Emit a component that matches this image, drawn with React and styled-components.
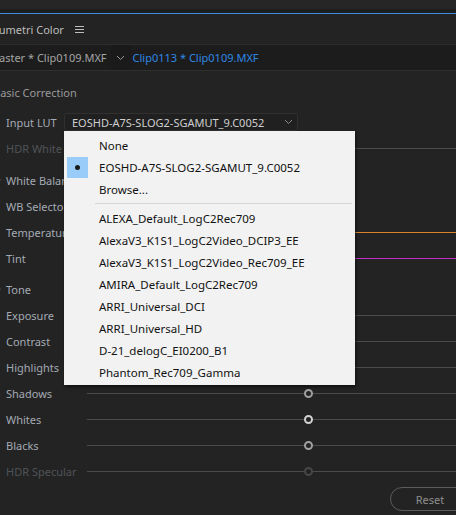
import React from "react";
import styled, { createGlobalStyle } from "styled-components";

const Global = createGlobalStyle`
  html, body {
    margin: 0;
    padding: 0;
    background: #232323;
    overflow: hidden;
  }
  body {
    font-family: "Noto Sans", "Liberation Sans", sans-serif;
    font-size: 11px;
  }
`;

const Panel = styled.div`
  width: 456px;
  height: 515px;
  overflow: hidden;
  background: #232323;
  display: flex;
  flex-direction: column;
  & > * {
    flex-shrink: 0;
  }
`;

const TopStrip = styled.div`
  height: 13px;
  background: linear-gradient(#262626 0, #262626 9px, #1e1e1e 9px);
  border-bottom: 1px solid #3d8ee0;
`;

const Header = styled.div`
  height: 30px;
  display: flex;
  align-items: center;
  gap: 11px;
  border-bottom: 1px solid #2c2c2c;
`;

const Title = styled.div`
  margin-left: -7px;
  color: #bdbdbd;
  font-size: 11px;
`;

const Burger = styled.div`
  width: 9px;
  display: flex;
  flex-direction: column;
  gap: 2px;
  span {
    height: 1px;
    background: #bdbdbd;
  }
`;

const TabBar = styled.div`
  height: 25px;
  background: #1c1c1c;
  border-bottom: 1px solid #2f2f2f;
  display: flex;
  align-items: center;
`;

const MasterTab = styled.div`
  margin-left: -11px;
  color: #a5a5a5;
  padding-right: 4px;
`;

const ChevronBox = styled.div`
  width: 20px;
  height: 25px;
  display: flex;
  align-items: center;
  justify-content: center;
  background: #1a1a1a;
  margin-right: 2px;
`;

const ClipTab = styled.div`
  color: #2f88e6;
`;

const Body = styled.div`
  display: flex;
  flex-direction: column;
  padding-top: 12px;
`;

const Section = styled.div`
  height: 18px;
  display: flex;
  align-items: center;
  margin-left: -7px;
  color: #9a9a9a;
  margin-bottom: 8px;
`;

const Row = styled.div`
  position: relative;
  height: 26px;
  display: flex;
  align-items: center;
  margin-top: ${(p) => p.gap || 0}px;
`;

const Label = styled.div`
  width: 81px;
  padding-left: 6px;
  flex-shrink: 0;
  white-space: nowrap;
  overflow: hidden;
  color: ${(p) => (p.dim ? "#4f5357" : "#a3aab3")};
`;

const Twirl = styled.div`
  position: absolute;
  left: -3px;
  top: 11px;
  width: 0;
  height: 0;
  border-top: 2px solid transparent;
  border-bottom: 2px solid transparent;
  border-left: 4px solid #777;
`;

const Track = styled.div`
  position: relative;
  flex: 1;
  height: 1px;
  background: ${(p) => p.bg || "#4a4a4a"};
`;

const Thumb = styled.div`
  position: absolute;
  left: 217px;
  top: -4px;
  width: 5px;
  height: 5px;
  border-radius: 50%;
  border: 2px solid ${(p) => p.color || "#a0a0a0"};
  background: #232323;
`;

const LutSelect = styled.div`
  margin-left: -23px;
  width: 221px;
  height: 16px;
  border: 1px solid #303030;
  border-radius: 3px;
  background: #202020;
  display: flex;
  align-items: center;
  justify-content: space-between;
  padding: 0 4px 0 7px;
  color: #cfcfcf;
`;

const Menu = styled.div`
  position: absolute;
  left: 64px;
  top: 131px;
  width: 291px;
  padding: 3px 0 2px;
  background: #f2f2f2;
  box-shadow: 1px 2px 3px rgba(0, 0, 0, 0.55);
  display: flex;
  flex-direction: column;
  z-index: 5;
`;

const Item = styled.div`
  height: 22px;
  display: flex;
  align-items: center;
  color: #111;
  font-size: 11.5px;
`;

const Check = styled.div`
  width: 21px;
  height: 21px;
  margin: 0 11px 0 3px;
  display: flex;
  align-items: center;
  justify-content: center;
  background: ${(p) => (p.on ? "#99ccf8" : "transparent")};
  &::after {
    content: "";
    width: 5px;
    height: 5px;
    border-radius: 50%;
    background: ${(p) => (p.on ? "#1a1a1a" : "transparent")};
  }
`;

const Sep = styled.div`
  height: 1px;
  background: #d6d6d6;
  margin: 3px 3px 3px 31px;
`;

const Footer = styled.div`
  display: flex;
  justify-content: flex-end;
  margin-right: -14px;
  margin-top: 3px;
`;

const ResetButton = styled.div`
  width: 78px;
  height: 22px;
  border: 1px solid #5c5c5c;
  border-radius: 12px;
  display: flex;
  align-items: center;
  justify-content: center;
  color: #8f8f8f;
`;

const Chevron = ({ color = "#9a9a9a" }) => (
  <svg width="9" height="6" viewBox="0 0 9 6">
    <path d="M1 1l3.5 3.5L8 1" fill="none" stroke={color} strokeWidth="1" />
  </svg>
);

const luts = [
  "ALEXA_Default_LogC2Rec709",
  "AlexaV3_K1S1_LogC2Video_DCIP3_EE",
  "AlexaV3_K1S1_LogC2Video_Rec709_EE",
  "AMIRA_Default_LogC2Rec709",
  "ARRI_Universal_DCI",
  "ARRI_Universal_HD",
  "D-21_delogC_EI0200_B1",
  "Phantom_Rec709_Gamma",
];

const tone = [
  { name: "Exposure" },
  { name: "Contrast" },
  { name: "Highlights" },
  { name: "Shadows" },
  { name: "Whites", thumb: "#d2d2d2" },
  { name: "Blacks" },
  { name: "HDR Specular", dim: true, thumb: "#474747" },
];

export default function App() {
  return (
    <Panel>
      <Global />
      <TopStrip />
      <Header>
        <Title>Lumetri Color</Title>
        <Burger>
          <span />
          <span />
          <span />
        </Burger>
      </Header>
      <TabBar>
        <MasterTab>Master * Clip0109.MXF</MasterTab>
        <ChevronBox>
          <Chevron />
        </ChevronBox>
        <ClipTab>Clip0113 * Clip0109.MXF</ClipTab>
      </TabBar>
      <Body>
        <Section>Basic Correction</Section>
        <Row>
          <Label>Input LUT</Label>
          <LutSelect>
            EOSHD-A7S-SLOG2-SGAMUT_9.C0052
            <Chevron color="#8a8a8a" />
          </LutSelect>
        </Row>
        <Row>
          <Label dim>HDR White</Label>
          <Track>
            <Thumb color="#474747" />
          </Track>
        </Row>
        <Row gap={6}>
          <Twirl />
          <Label>White Balance</Label>
        </Row>
        <Row>
          <Label>WB Selector</Label>
        </Row>
        <Row>
          <Label>Temperature</Label>
          <Track bg="linear-gradient(to right, #3b7fd6, #8a8a8a 50%, #d9822b 75%)">
            <Thumb />
          </Track>
        </Row>
        <Row>
          <Label>Tint</Label>
          <Track bg="linear-gradient(to right, #3fb34f, #8a8a8a 50%, #c22fc4 75%)">
            <Thumb />
          </Track>
        </Row>
        <Row gap={5}>
          <Twirl />
          <Label>Tone</Label>
        </Row>
        {tone.map((t) => (
          <Row key={t.name}>
            <Label dim={t.dim}>{t.name}</Label>
            <Track>
              <Thumb color={t.thumb} />
            </Track>
          </Row>
        ))}
        <Footer>
          <ResetButton>Reset</ResetButton>
        </Footer>
      </Body>
      <Menu>
        <Item>
          <Check />
          None
        </Item>
        <Item>
          <Check on />
          EOSHD-A7S-SLOG2-SGAMUT_9.C0052
        </Item>
        <Item>
          <Check />
          Browse...
        </Item>
        <Sep />
        {luts.map((l) => (
          <Item key={l}>
            <Check />
            {l}
          </Item>
        ))}
      </Menu>
    </Panel>
  );
}
